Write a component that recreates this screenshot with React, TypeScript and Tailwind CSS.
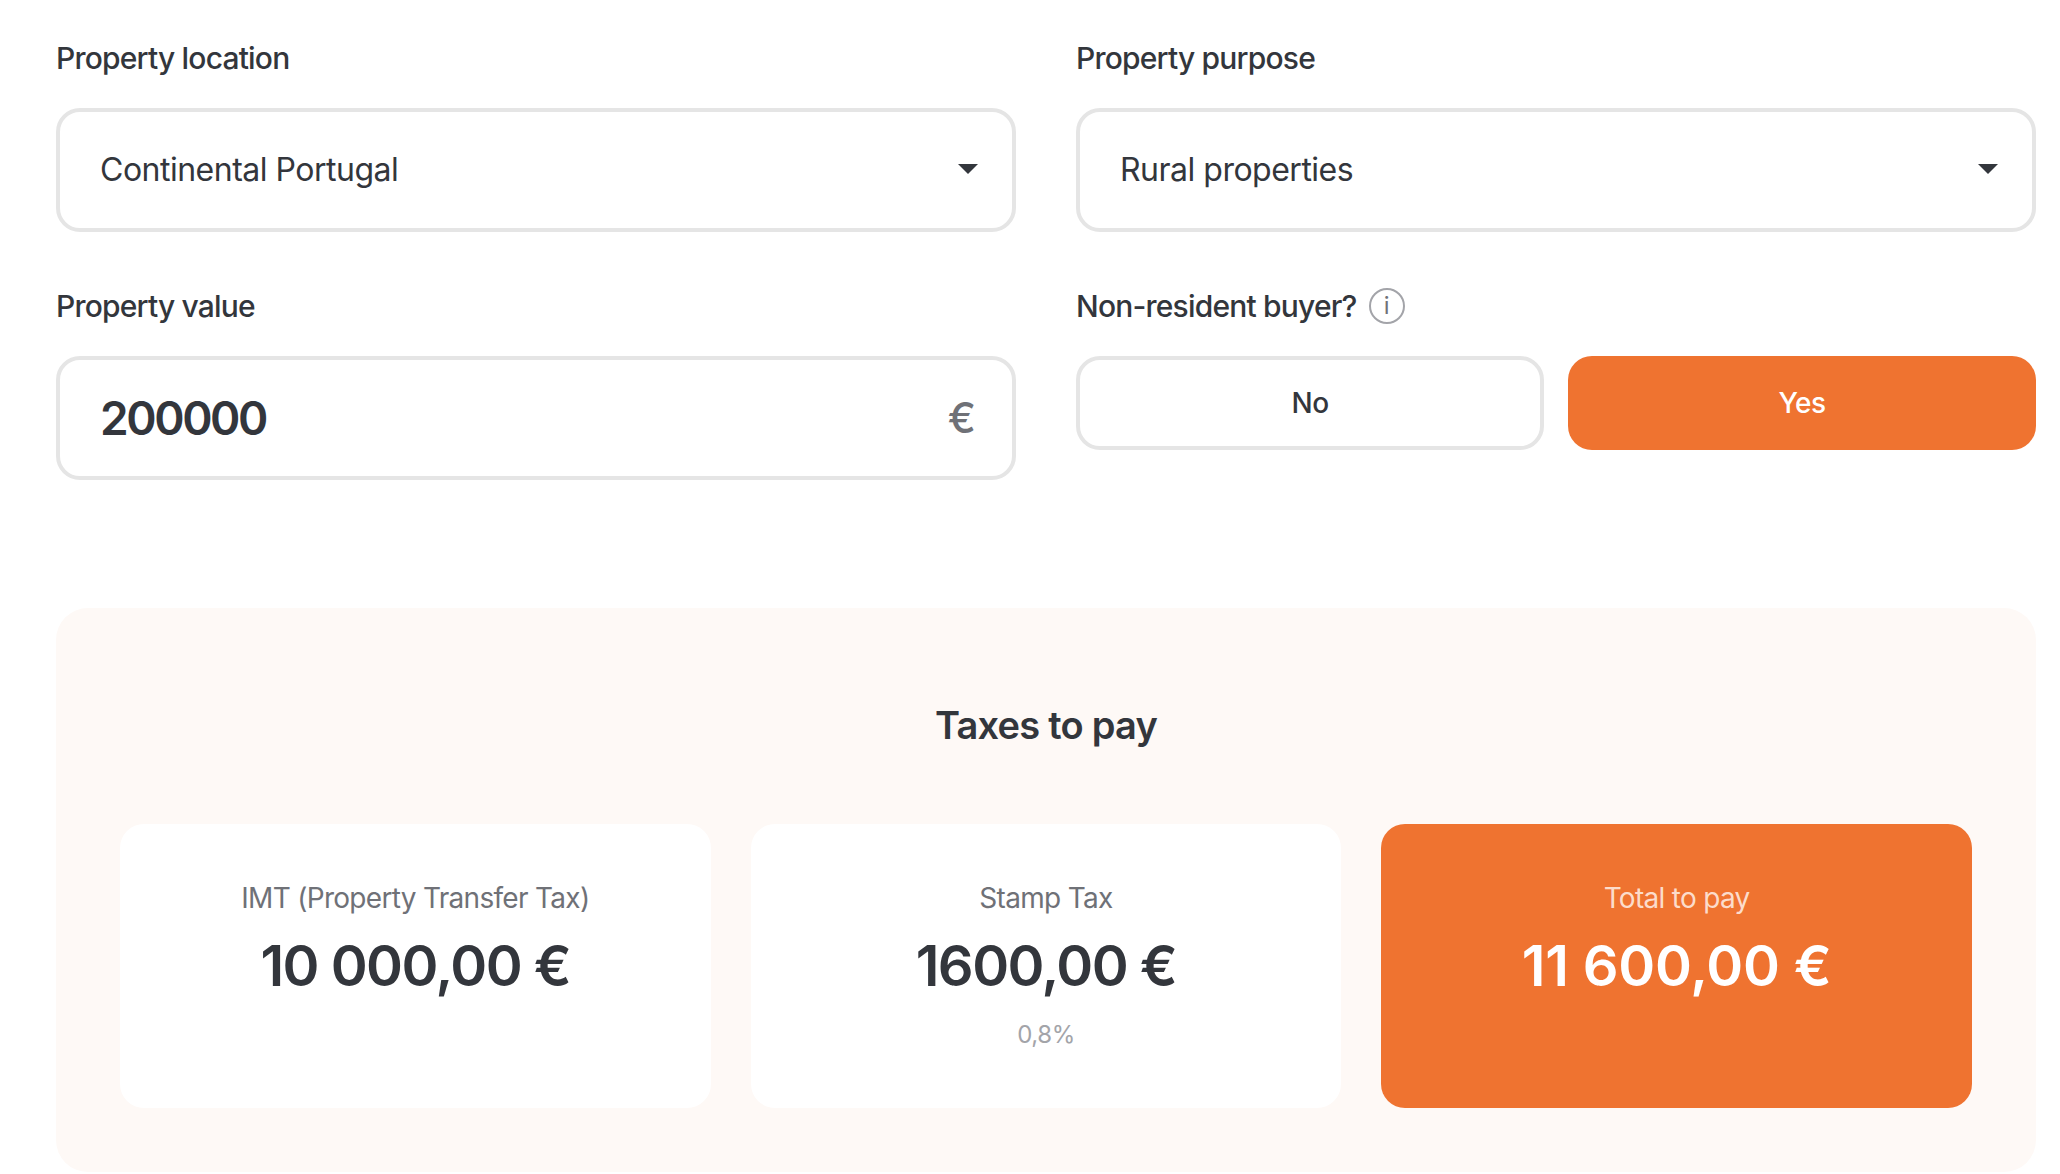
const font = 'font-["Inter","Liberation_Sans",sans-serif]';

function Caret() {
    return (
        <svg width="20" height="10" viewBox="0 0 20 10" className="mb-[3px] shrink-0">
            <path d="M0 0h20L10 10z" fill="#33363c" />
        </svg>
    );
}

function SelectField({ label, value }: { label: string; value: string }) {
    return (
        <div className="flex flex-col gap-[32px]">
            <span className="text-[30px] leading-[36px] font-medium tracking-[-0.8px] text-[#33363c]">{label}</span>
            <div className="flex h-[124px] items-center justify-between rounded-[24px] border-4 border-[#e5e5e5] bg-white pr-[34px] pl-[40px]">
                <span className="text-[32px] leading-[40px] tracking-[-0.5px] text-[#33363c]">{value}</span>
                <Caret />
            </div>
        </div>
    );
}

function TaxCard({ label, value, note, active }: { label: string; value: string; note?: string; active?: boolean }) {
    return (
        <div
            className={`flex h-[284px] flex-col items-center rounded-[24px] pt-[56px] ${active ? 'bg-[#ef7330]' : 'bg-white'}`}
        >
            <span className={`text-[28px] leading-[36px] tracking-[-0.7px] ${active ? 'text-[#fcdccb]' : 'text-[#6f7177]'}`}>
                {label}
            </span>
            <span
                className={`mt-[16px] text-[56px] leading-[68px] font-semibold ${active ? 'tracking-[-0.2px] text-white' : 'tracking-[-1.5px] text-[#33363c]'}`}
            >
                {value}
            </span>
            {note && <span className="mt-[19px] text-[24px] leading-[32px] tracking-[-0.4px] text-[#a3a4a9]">{note}</span>}
        </div>
    );
}

export default function App() {
    return (
        <div className={`min-h-[1174px] bg-white pt-[40px] pr-[24px] pl-[56px] ${font}`}>
            <div className="grid grid-cols-2 gap-x-[60px] gap-y-[56px]">
                <SelectField label="Property location" value="Continental Portugal" />
                <SelectField label="Property purpose" value="Rural properties" />

                <div className="flex flex-col gap-[32px]">
                    <span className="text-[30px] leading-[36px] font-medium tracking-[-0.8px] text-[#33363c]">Property value</span>
                    <div className="flex h-[124px] items-center justify-between rounded-[24px] border-4 border-[#e5e5e5] bg-white pr-[36px] pl-[40px]">
                        <span className="text-[46px] leading-[52px] font-semibold tracking-[-2.4px] text-[#33363c]">200000</span>
                        <span className="text-[42px] leading-[44px] font-medium text-[#6f7177]">€</span>
                    </div>
                </div>

                <div className="flex flex-col gap-[32px]">
                    <div className="flex items-center gap-[12px]">
                        <span className="text-[30px] leading-[36px] font-medium tracking-[-0.8px] text-[#33363c]">Non-resident buyer?</span>
                        <span className="flex h-[36px] w-[36px] items-center justify-center rounded-full border-2 border-[#a3a4a9] text-[24px] leading-none text-[#6f7177]">
                            i
                        </span>
                    </div>
                    <div className="grid grid-cols-2 gap-[24px]">
                        <button type="button" className="h-[94px] rounded-[24px] border-4 border-[#e5e5e5] bg-white text-[28px] font-medium tracking-[-0.5px] text-[#33363c]">
                            No
                        </button>
                        <button type="button" className="h-[94px] rounded-[24px] bg-[#ef7330] text-[28px] font-medium tracking-[-0.5px] text-white">
                            Yes
                        </button>
                    </div>
                </div>
            </div>

            <section className="mt-[128px] rounded-[32px] bg-[#fef9f6] px-[64px] pt-[95px] pb-[64px]">
                <h2 className="text-center text-[38px] leading-[44px] font-semibold tracking-[-0.75px] text-[#33363c]">Taxes to pay</h2>
                <div className="mt-[77px] grid grid-cols-3 gap-[40px]">
                    <TaxCard label="IMT (Property Transfer Tax)" value="10 000,00 €" />
                    <TaxCard label="Stamp Tax" value="1600,00 €" note="0,8%" />
                    <TaxCard label="Total to pay" value="11 600,00 €" active />
                </div>
            </section>
        </div>
    );
}
